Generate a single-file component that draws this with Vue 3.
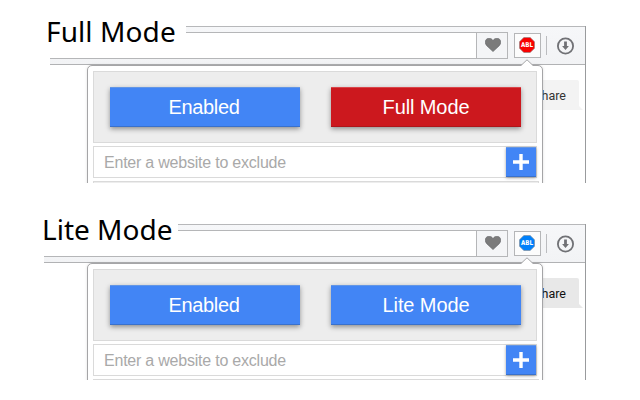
<script setup>
const modes = [
  { name: 'Full Mode', kind: 'full' },
  { name: 'Lite Mode', kind: 'lite' }
]
</script>

<template>
  <main class="page">
    <section v-for="mode in modes" :key="mode.kind" class="demo" :class="mode.kind">
      <h2 class="title">{{ mode.name }}</h2>
      <div class="window">
        <header class="toolbar">
          <div class="address">
            <div class="url"></div>
            <div class="heart">
              <svg width="16" height="14" viewBox="0 0 16 14">
                <path d="M8 13.600 2 8C-.2 5.700-.2 3 1.200 1.500 3-.3 6.200-.2 8 2.500 9.800-.2 13-.3 14.800 1.500 16.200 3 16.200 5.700 14 8Z" fill="#7b7b7b" stroke="#626366" stroke-width=".6" />
              </svg>
            </div>
          </div>
          <div class="extension">
            <svg width="16" height="16" viewBox="0 0 16 16">
              <path class="octagon" d="M4.800.5h6.400L15.500 4.800v6.400L11.200 15.500H4.800L.5 11.200V4.800Z" />
              <text x="8" y="10.300" text-anchor="middle" textLength="12" lengthAdjust="spacingAndGlyphs">ABL</text>
            </svg>
          </div>
          <i class="separator"></i>
          <svg class="download" width="18" height="18" viewBox="0 0 18 18">
            <circle cx="9.500" cy="9" r="7.600" fill="none" stroke="#707175" stroke-width="1.800" />
            <path d="M8.100 4.500h2.800v4.500h2L9.500 13 6.100 9h2Z" fill="#707175" />
          </svg>
        </header>
        <div class="content">
          <div class="popup">
            <svg class="arrow" width="14" height="8" viewBox="0 0 14 8">
              <path d="M0 8V6.500H1L7 .8 13 6.500h1V8Z" fill="#fff" />
              <path d="M0 6.500H1L7 .8 13 6.500h1" fill="none" stroke="#a5a5a7" />
            </svg>
            <div class="controls">
              <button class="action">Enabled</button>
              <button class="action mode">{{ mode.name }}</button>
            </div>
            <div class="exclude">
              <span class="placeholder">Enter a website to exclude</span>
              <button class="add" aria-label="Add">
                <svg width="16" height="16" viewBox="0 0 16 16">
                  <path d="M8 0v16M0 8h16" stroke="#fff" stroke-width="3.400" />
                </svg>
              </button>
            </div>
            <div class="list"></div>
          </div>
          <div class="share"><span>hare</span></div>
        </div>
      </div>
    </section>
  </main>
</template>

<style>
body { margin: 0; background: #fff; }
</style>

<style scoped>
* { box-sizing: border-box; }
.page { width: 640px; height: 400px; padding-top: 26px; overflow: hidden; background: #fff; }
.demo { position: relative; height: 198px; padding-left: 50px; }
.demo.lite { padding-left: 44px; }
.title {
  position: absolute; z-index: 2; left: 40px; top: -16px; width: 146px; height: 47px;
  margin: 0; padding-left: 6px; background: #fff; color: #000;
  font: 400 28px/42px "Noto Sans", "Open Sans", sans-serif; letter-spacing: .1px; white-space: nowrap;
}
.lite .title { left: 36px; width: 142px; letter-spacing: 0; }
.window {
  width: 536px; height: 157px; overflow: hidden; border-right: 1px solid #999b9d;
}
.lite .window { width: 542px; height: 156px; }
.toolbar {
  display: flex; align-items: center; height: 39px; border-top: 1px solid #b7b8ba;
  border-bottom: 1px solid #b1b2b4; background: linear-gradient(#f6f7f9, #f2f3f5);
}
.address { flex: 1; display: flex; height: 27px; border: 1px solid #b5b6b8; border-left: 0; }
.url { flex: 1; background: #fff; }
.heart {
  display: flex; align-items: center; justify-content: center; width: 31px;
  padding: 0 0 1px 2px; border-left: 1px solid #b5b6b8; background: #f4f5f7;
}
.extension {
  display: flex; align-items: center; justify-content: center; width: 27px; height: 25px;
  margin-left: 6px; padding: 0 1px 1px 0; border: 1px solid #b5b6b8; background: #fcfcfc;
}
.octagon { fill: #f80000; stroke: #998080; stroke-width: .7; }
.lite .octagon { fill: #0080fa; stroke: #8090a0; }
.extension text { font: 700 6.500px "DejaVu Sans", sans-serif; fill: #fff; }
.separator { width: 1px; height: 19px; margin-left: 5px; background: #bbbcbf; }
.download { margin: 0 11px 0 9px; }
.content { display: flex; justify-content: flex-end; }
.popup {
  position: relative; z-index: 1; flex: none; width: 456px; height: 130px; padding: 5px;
  border: 1px solid #a5a5a7; border-radius: 5px 5px 0 0; background: #fff;
  box-shadow: 0 0 3px rgba(0, 0, 0, .12);
}
.arrow { position: absolute; left: 432px; top: -7px; }
.controls {
  display: flex; gap: 31px; width: 444px; height: 72px; padding: 15px 0 0 16px;
  border: 1px solid #dadada; background: #ededed;
}
.action {
  display: block; width: 190px; height: 40px; margin: 0; padding: 0 2px 0 0; border: 0;
  border-top: 1px solid #6396e5; border-bottom: 1px solid #3a71cb; background: #4285f5; color: #fff;
  font: 400 20px/36px "Liberation Sans", Arial, sans-serif; letter-spacing: -.35px;
  box-shadow: 0 2px 5px rgba(0, 0, 0, .4);
}
.action.mode { padding-right: 0; letter-spacing: -.1px; }
.full .mode { border-top-color: #d9454a; border-bottom-color: #ae151a; background: #cc181e; }
.exclude {
  display: flex; align-items: center; width: 444px; height: 32px; margin-top: 3px;
  border: 1px solid #dadada; background: #fff;
}
.placeholder {
  flex: 1; padding: 2px 0 0 10px; color: #a9a9a9; white-space: nowrap;
  font: 400 16px/28px "Liberation Sans", Arial, sans-serif; letter-spacing: -.22px;
}
.add {
  display: flex; align-items: center; justify-content: center; width: 30px; height: 30px;
  margin: 0; padding: 0; border: 0; border-top: 1px solid #6396e5; border-bottom: 1px solid #3a71cb;
  background: #4285f5; box-shadow: 0 1px 3px rgba(0, 0, 0, .35);
}
.list { width: 446px; height: 12px; margin-top: 3px; border: 1px solid #dadada; background: #ededed; }
.share {
  position: relative; display: flex; justify-content: flex-end; width: 36px; height: 30px;
  margin: 15px 6px 0 0; padding-right: 13px;
  border-radius: 0 2px 0 0; background: #f3f3f3;
  color: #333; font: 400 12.500px/32px Roboto, sans-serif;
}
.lite .share { background: #e8e8e8; color: #111; }
.share::after {
  content: ""; position: absolute; left: 100%; bottom: 0; width: 4px; height: 4px;
  background: inherit; clip-path: polygon(0 0, 100% 100%, 0 100%);
}
</style>
